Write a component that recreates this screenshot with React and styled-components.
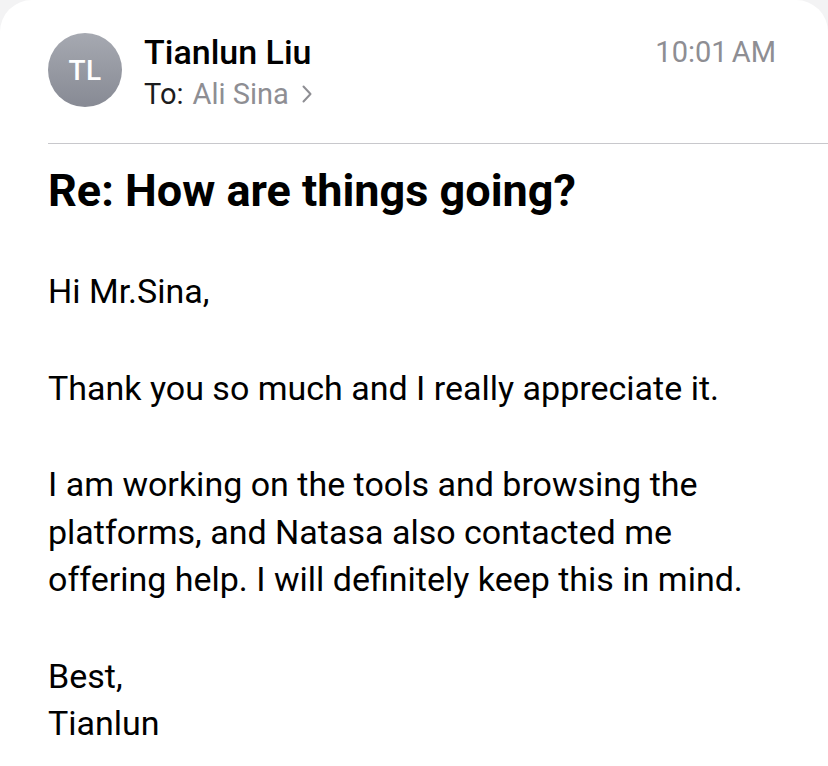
import { createGlobalStyle, styled } from "styled-components";

const GlobalStyle = createGlobalStyle`
  html, body {
    margin: 0;
    padding: 0;
    background: #f3f3f4;
  }
  body {
    font-family: Roboto, "Liberation Sans", sans-serif;
    -webkit-font-smoothing: antialiased;
  }
`;

const Card = styled.main`
  background: #fff;
  min-height: 100vh;
  border-radius: 32px 32px 0 0;
  overflow: hidden;
`;

const Header = styled.header`
  display: flex;
  align-items: flex-start;
  padding: 33px 52px 0 48px;
  height: 143px;
  box-sizing: border-box;
`;

const Avatar = styled.div`
  width: 74px;
  height: 74px;
  border-radius: 50%;
  flex: none;
  background: linear-gradient(180deg, #a6a9b1 0%, #878a94 100%);
  color: #fff;
  display: flex;
  align-items: center;
  justify-content: center;
  font-size: 28px;
  font-weight: 500;
  letter-spacing: 0.5px;
`;

const Sender = styled.div`
  flex: 1;
  margin-left: 22px;
  display: flex;
  flex-direction: column;
  gap: 4px;
`;

const Name = styled.div`
  font-size: 34px;
  font-weight: 500;
  line-height: 38px;
  color: #000;
`;

const Recipient = styled.div`
  display: flex;
  align-items: center;
  font-size: 29px;
  line-height: 38px;
  color: #1c1c1e;
`;

const RecipientName = styled.span`
  color: #8e8e93;
  margin-left: 9px;
`;

const Chevron = styled.svg`
  margin-left: 12px;
  width: 12px;
  height: 20px;
`;

const Time = styled.div`
  font-size: 29px;
  line-height: 38px;
  color: #8e8e93;
  word-spacing: -3px;
`;

const Divider = styled.hr`
  margin: 0 0 0 48px;
  border: none;
  border-top: 1px solid #c8c8cc;
`;

const Content = styled.section`
  padding: 22px 40px 0 48px;
`;

const Subject = styled.h1`
  margin: 0 0 52px;
  font-size: 45px;
  font-weight: 700;
  line-height: 50px;
  color: #000;
`;

const Paragraph = styled.p`
  margin: 0 0 49px;
  font-size: 34px;
  line-height: 47.5px;
  color: #000;
`;

export default function App() {
  return (
    <>
      <GlobalStyle />
      <Card>
        <Header>
          <Avatar>TL</Avatar>
          <Sender>
            <Name>Tianlun Liu</Name>
            <Recipient>
              To:<RecipientName>Ali Sina</RecipientName>
              <Chevron viewBox="0 0 12 20" fill="none">
                <path
                  d="M2.5 2.5l7 7.5-7 7.5"
                  stroke="#8e8e93"
                  strokeWidth="2"
                  strokeLinecap="round"
                  strokeLinejoin="round"
                />
              </Chevron>
            </Recipient>
          </Sender>
          <Time>10:01 AM</Time>
        </Header>
        <Divider />
        <Content>
          <Subject>Re: How are things going?</Subject>
          <Paragraph>Hi Mr.Sina,</Paragraph>
          <Paragraph>Thank you so much and I really appreciate it.</Paragraph>
          <Paragraph>
            I am working on the tools and browsing the
            <br />
            platforms, and Natasa also contacted me
            <br />
            offering help. I will definitely keep this in mind.
          </Paragraph>
          <Paragraph>
            Best,
            <br />
            Tianlun
          </Paragraph>
        </Content>
      </Card>
    </>
  );
}
